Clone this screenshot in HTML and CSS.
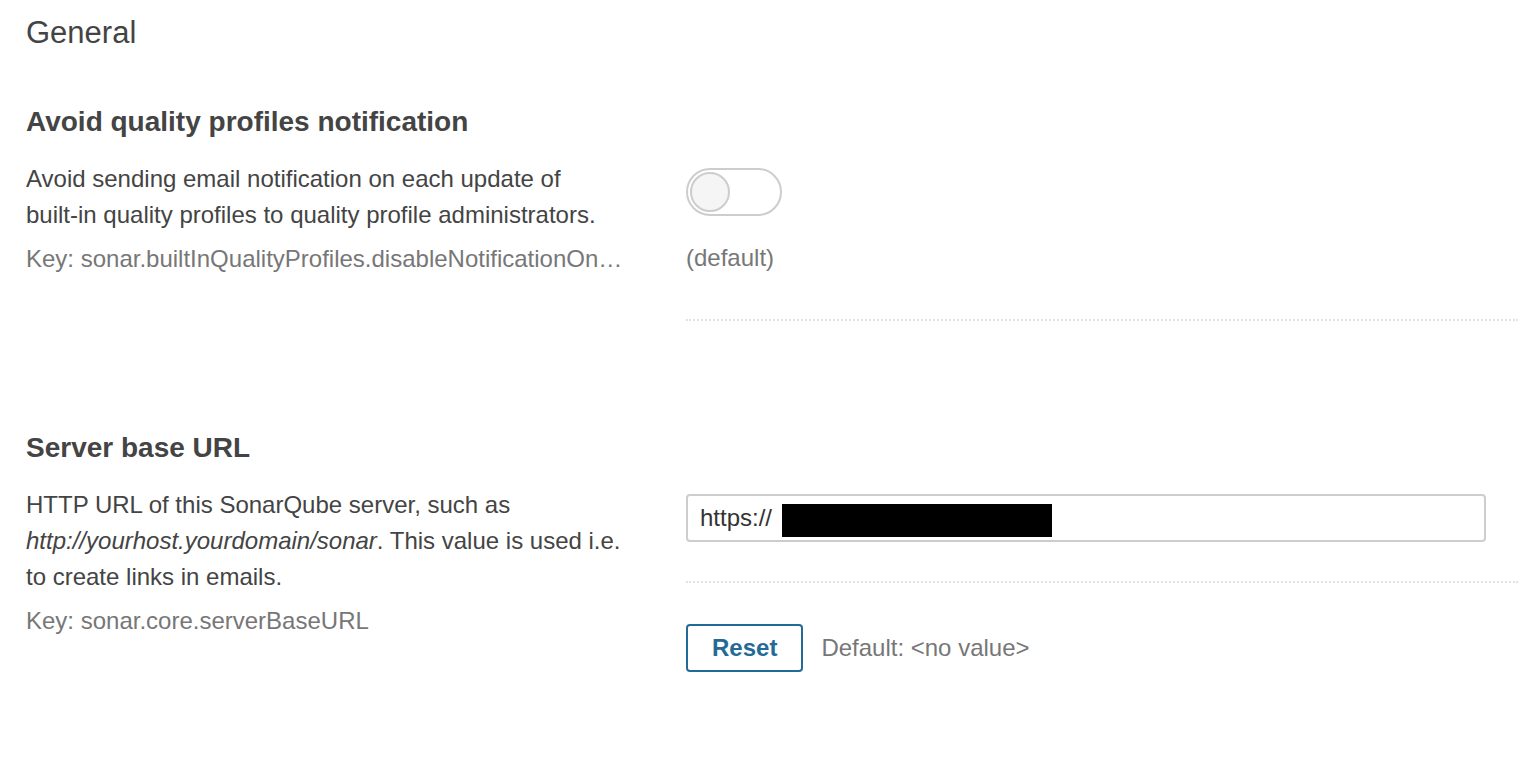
FILE: index.html
```
<!DOCTYPE html>
<html lang="en">
<head>
  <meta charset="UTF-8" />
  <meta name="viewport" content="width=device-width, initial-scale=1.0"/>
  <title>General Settings</title>
  <link rel="stylesheet" href="styles.css">
</head>
<body>
  <div class="settings-page">
    <h2 class="category-title">General</h2>

    <!-- Avoid quality profiles notification -->
    <div class="definition first">
      <h3 class="definition-name">Avoid quality profiles notification</h3>
      <div class="definition-body">
        <div class="definition-left">
          <div class="description">Avoid sending email notification on each update of <span class="nowrap">built-in</span> quality profiles to quality profile administrators.</div>
          <div class="key">Key: sonar.builtInQualityProfiles.disableNotificationOnUpdate</div>
        </div>
        <div class="definition-right">
          <div class="input-area toggle-area">
            <button class="toggle" type="button" aria-label="Toggle"><span class="toggle-knob"></span></button>
            <div class="note">(default)</div>
          </div>
        </div>
      </div>
    </div>

    <!-- Server base URL -->
    <div class="definition">
      <h3 class="definition-name">Server base URL</h3>
      <div class="definition-body">
        <div class="definition-left">
          <div class="description">HTTP URL of this SonarQube server, such as <em>http://yourhost.yourdomain/sonar</em>. This value is used i.e. to create links in emails.</div>
          <div class="key">Key: sonar.core.serverBaseURL</div>
        </div>
        <div class="definition-right">
          <div class="input-area text-area">
            <div class="text-input">https://<span class="redacted"></span></div>
          </div>
          <div class="reset-row">
            <button class="reset-button" type="button">Reset</button>
            <span class="default-value">Default: &lt;no value&gt;</span>
          </div>
        </div>
      </div>
    </div>
  </div>
</body>
</html>
```

FILE: styles.css
```
body {
  margin: 0;
  font-family: "Liberation Sans", Arial, sans-serif;
  color: #444;
  background: #fff;
}
.settings-page {
  padding: 15px 0 0 26px;
}
.category-title {
  margin: 0 0 53px;
  font-size: 31px;
  line-height: 36px;
  font-weight: normal;
  color: #444;
}
.definition.first {
  margin-bottom: 109px;
}
.definition-name {
  margin: 0 0 21px;
  font-size: 28px;
  line-height: 36px;
  font-weight: bold;
  color: #444;
}
.definition-body {
  display: flex;
}
.definition-left {
  width: 606px;
  padding-right: 54px;
  flex-shrink: 0;
}
.description {
  font-size: 24px;
  line-height: 36px;
}
.description em {
  font-style: italic;
}
.nowrap {
  white-space: nowrap;
}
.key {
  margin-top: 8px;
  font-size: 24px;
  line-height: 36px;
  color: #777;
  white-space: nowrap;
  overflow: hidden;
  text-overflow: ellipsis;
}
.definition-right {
  flex: 1;
  min-width: 0;
}
.input-area {
  padding-top: 7px;
  border-bottom: 2px dotted #e2e2e2;
}
.toggle-area {
  padding-bottom: 43px;
}
.text-area {
  padding-bottom: 39px;
}
.toggle {
  display: flex;
  align-items: center;
  width: 96px;
  height: 48px;
  padding: 0 2px;
  border: 2px solid #cdcdcd;
  border-radius: 24px;
  background: #fff;
  box-sizing: border-box;
  cursor: pointer;
}
.toggle-knob {
  width: 40px;
  height: 40px;
  border: 2px solid #cdcdcd;
  border-radius: 50%;
  background: #f5f5f5;
  box-sizing: border-box;
}
.note {
  margin-top: 24px;
  font-size: 24px;
  line-height: 36px;
  color: #777;
}
.text-input {
  display: flex;
  align-items: center;
  width: 800px;
  height: 48px;
  padding: 0 12px;
  border: 2px solid #cdcdcd;
  border-radius: 4px;
  box-sizing: border-box;
  font-size: 24px;
  color: #333;
}
.redacted {
  display: inline-block;
  width: 270px;
  height: 33px;
  margin: 5px 0 0 10px;
  background: #000;
}
.reset-row {
  display: flex;
  align-items: center;
  margin-top: 41px;
}
.reset-button {
  height: 48px;
  padding: 0 24px;
  border: 2px solid #236a97;
  border-radius: 4px;
  background: #fff;
  color: #236a97;
  font-family: inherit;
  font-size: 24px;
  font-weight: bold;
  cursor: pointer;
}
.default-value {
  margin-left: 18px;
  font-size: 24px;
  color: #777;
}
```
